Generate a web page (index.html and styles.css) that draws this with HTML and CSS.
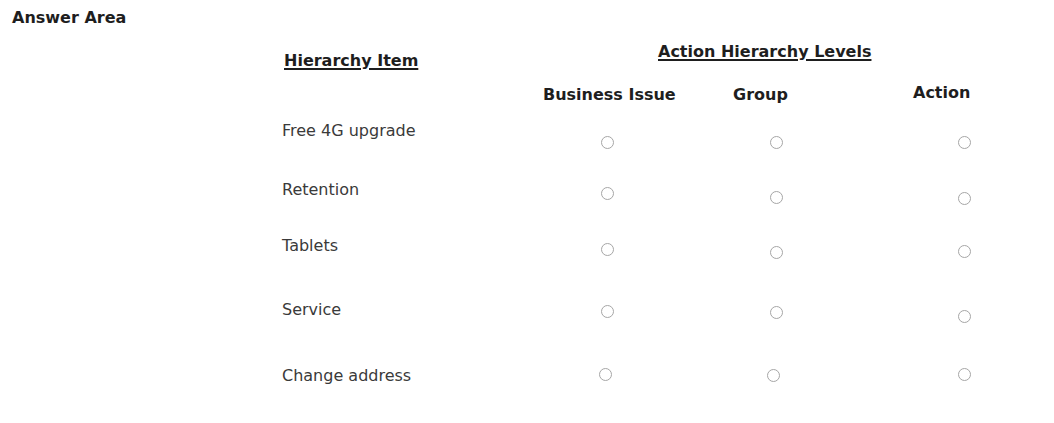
FILE: index.html
```html
<!DOCTYPE html>
<html>
<head>
<meta charset="utf-8">
<link rel="stylesheet" href="styles.css">
</head>
<body>
<div class="page">
  <h1 class="title">Answer Area</h1>
  <div class="table">
    <div class="head1">
      <div class="h-item">Hierarchy Item</div>
      <div class="h-levels">Action Hierarchy Levels</div>
    </div>
    <div class="head2">
      <div class="h-bi">Business Issue</div>
      <div class="h-group">Group</div>
      <div class="h-action">Action</div>
    </div>
    <div class="row row1">
      <div class="item">Free 4G upgrade</div>
      <span class="radio m15"></span>
      <span class="radio m15"></span>
      <span class="radio m15"></span>
    </div>
    <div class="row row2">
      <div class="item">Retention</div>
      <span class="radio m7"></span>
      <span class="radio m11"></span>
      <span class="radio m12"></span>
    </div>
    <div class="row row3">
      <div class="item">Tablets</div>
      <span class="radio m7"></span>
      <span class="radio m10"></span>
      <span class="radio m9"></span>
    </div>
    <div class="row row4">
      <div class="item">Service</div>
      <span class="radio m5"></span>
      <span class="radio m6"></span>
      <span class="radio m10"></span>
    </div>
    <div class="row row5">
      <div class="item">Change address</div>
      <span class="radio m2 nudge-l1"></span>
      <span class="radio m3 nudge-l3"></span>
      <span class="radio m2"></span>
    </div>
  </div>
</div>
</body>
</html>
```
FILE: styles.css
```css
* { box-sizing: border-box; }
html, body { margin: 0; padding: 0; background: #fff; }
body {
  font-family: "DejaVu Sans", Verdana, sans-serif;
  font-size: 16px;
  line-height: 20px;
  color: #3a3a3a;
  width: 1054px;
  height: 423px;
  overflow: hidden;
}
.page { padding: 8px 0 0 12px; }
.title {
  margin: 0;
  font-size: 16px;
  line-height: 20px;
  font-weight: bold;
  color: #1e1e1e;
}
.table { margin-left: 270px; }
.head1 {
  display: grid;
  grid-template-columns: 376px auto;
  align-items: start;
  margin-top: 14px;
  font-weight: bold;
  color: #1e1e1e;
  text-decoration: underline;
  text-decoration-thickness: 1.5px;
  text-underline-offset: 2px;
}
.h-item { margin-left: 2px; margin-top: 9px; }
.head2 {
  display: grid;
  grid-template-columns: 190px 180px auto;
  align-items: start;
  padding-left: 261px;
  margin-top: 12px;
  font-weight: bold;
  color: #1e1e1e;
}
.h-bi, .h-group { margin-top: 2px; }
.row {
  display: grid;
  grid-template-columns: 319px 169px 188px 13px;
  align-items: start;
}
.row1 { margin-top: 16px; height: 59px; }
.row2 { height: 56px; }
.row3 { height: 64px; }
.row4 { height: 66px; }
.row5 { height: 40px; }
.radio {
  width: 13px;
  height: 13px;
  border: 1.5px solid #a6a6a6;
  border-radius: 50%;
  background: #fff;
}
.m2 { margin-top: 2px; }
.m3 { margin-top: 3px; }
.m5 { margin-top: 5px; }
.m6 { margin-top: 6px; }
.m7 { margin-top: 7px; }
.m9 { margin-top: 9px; }
.m10 { margin-top: 10px; }
.m11 { margin-top: 11px; }
.m12 { margin-top: 12px; }
.m15 { margin-top: 15px; }
.nudge-l1 { margin-left: -2px; }
.nudge-l3 { margin-left: -3px; }
```
